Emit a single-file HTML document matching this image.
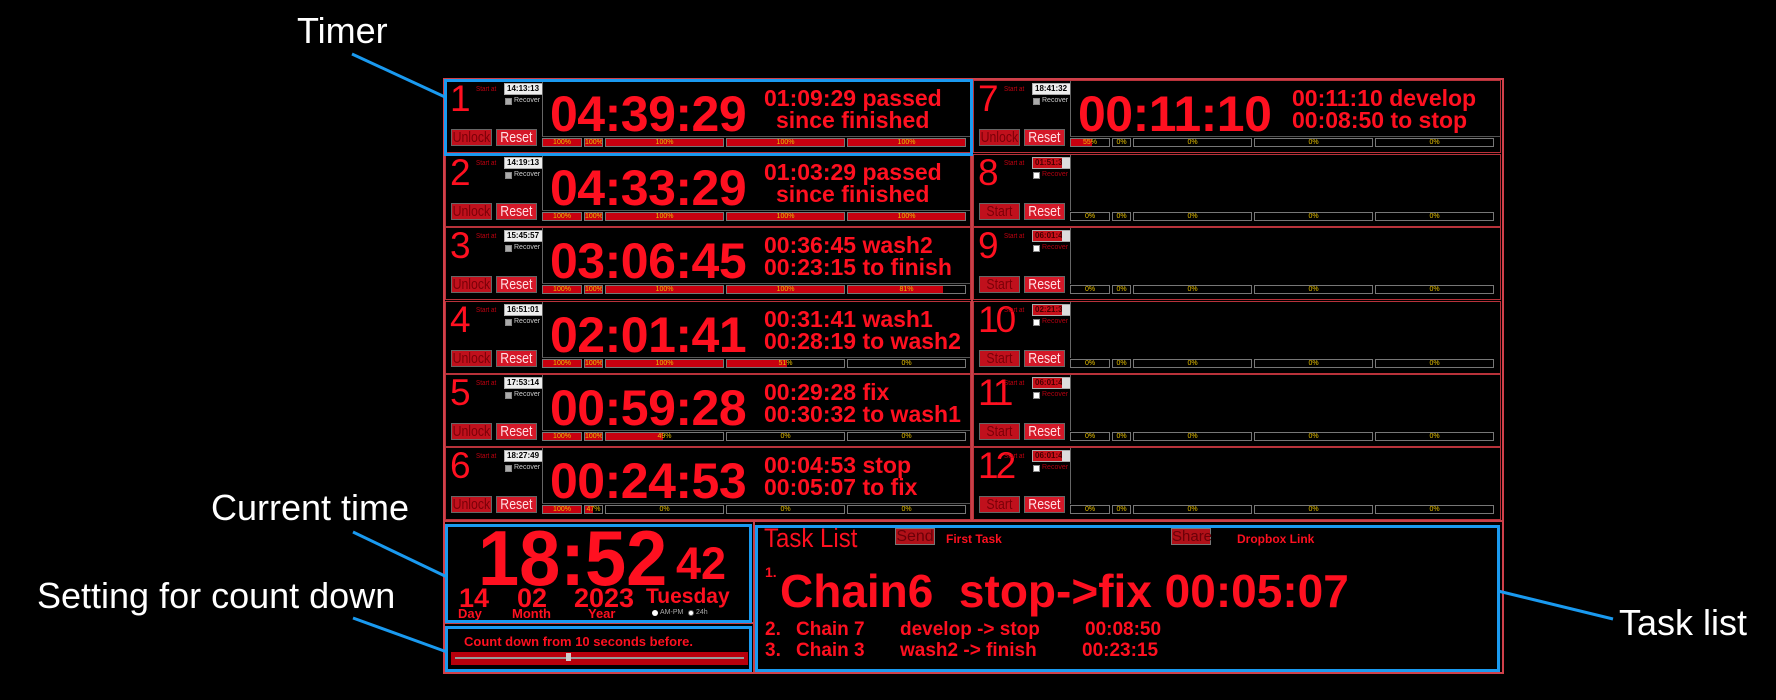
<!DOCTYPE html>
<html><head><meta charset="utf-8">
<style>
*{margin:0;padding:0;box-sizing:border-box}
body{width:1776px;height:700px;background:#000;position:relative;overflow:hidden;font-family:"Liberation Sans",sans-serif;color:#ff1020}
.a{position:absolute}
.cell{position:absolute;height:73px;border:1px solid #b8323a;overflow:hidden;background:#000}
.n{position:absolute;left:4px;top:-2px;font-size:37px;line-height:40px;color:#ff1020}
.sa{position:absolute;left:30px;top:5px;font-size:7px;color:#c00010;transform:scaleX(0.9);transform-origin:left}
.ti{position:absolute;left:58px;top:2px;width:39px;height:12px;background:#eee;border:1px solid #aaa;font-size:8px;font-weight:bold;color:#000;line-height:10px;padding-left:2px}
.ti.d{background:#c8101a;color:#400}
.ti.d::after{content:"";position:absolute;right:0;top:0;width:8px;height:10px;background:#ddd}
.cb{position:absolute;left:59px;top:17px;width:7px;height:7px;background:#aaa;border:1px solid #888}
.cb.w{background:#fff}
.rc{position:absolute;left:68px;top:16px;font-size:7px;color:#ccc}
.rc.r{color:#b00010}
.b1,.b2{position:absolute;top:48px;height:17px;width:41px;border:1px solid #666;overflow:hidden}
.b1 span,.b2 span{display:block;width:125%;margin-left:-12.5%;text-align:center;font-size:15px;line-height:15px;transform:scaleX(0.82)}
.b1{left:5px;background:#c0101c;color:#7a0008}
.b2{left:50px;background:#d41828;color:#ffe0e4}
.dv{position:absolute;left:96px;top:0;width:1px;height:56px;background:#666}
.hl{position:absolute;left:96px;top:55px;right:0;height:1px;background:#555}
.bt{position:absolute;left:104px;top:5px;font-size:50px;font-weight:bold;line-height:56px;letter-spacing:-0.5px}
.r1,.r2{position:absolute;font-size:23px;font-weight:bold;line-height:24px;white-space:nowrap}
.r1{left:318px;top:5px}.r2{left:318px;top:27px}
.bar{position:absolute;top:57px;height:9px;border:1px solid #777;background:#000;font-size:7px;line-height:7px;color:#e8c000;text-align:center;overflow:hidden}
.bar i{position:absolute;left:0;top:0;bottom:0;background:#c8000f}
.bar span{position:relative}
.lbl{position:absolute;color:#fff;font-size:36px;white-space:nowrap}
.blue{position:absolute;border:3px solid #1a9af0}
</style></head><body>

<div class="a" style="left:443px;top:78px;width:1061px;height:596px;border:2px solid #d0404a"></div>
<div class="a" style="left:971px;top:79px;width:2px;height:442px;background:#c84048"></div>

<div class="cell" style="left:445px;top:80px;width:526px">
<div class="n">1</div><div class="sa">Start at</div><div class="ti">14:13:13</div><div class="cb"></div><div class="rc">Recover</div>
<div class="b1"><span>Unlock</span></div><div class="b2"><span>Reset</span></div><div class="dv"></div><div class="hl"></div>
<div class="bt">04:39:29</div><div class="r1">01:09:29 passed</div><div class="r2" style="left:330px">since finished</div>
<div class="bar" style="left:96px;width:40px"><i style="width:100%"></i><span>100%</span></div>
<div class="bar" style="left:138px;width:19px"><i style="width:100%"></i><span>100%</span></div>
<div class="bar" style="left:159px;width:119px"><i style="width:100%"></i><span>100%</span></div>
<div class="bar" style="left:280px;width:119px"><i style="width:100%"></i><span>100%</span></div>
<div class="bar" style="left:401px;width:119px"><i style="width:100%"></i><span>100%</span></div>
</div>

<div class="cell" style="left:445px;top:154px;width:526px">
<div class="n">2</div><div class="sa">Start at</div><div class="ti">14:19:13</div><div class="cb"></div><div class="rc">Recover</div>
<div class="b1"><span>Unlock</span></div><div class="b2"><span>Reset</span></div><div class="dv"></div><div class="hl"></div>
<div class="bt">04:33:29</div><div class="r1">01:03:29 passed</div><div class="r2" style="left:330px">since finished</div>
<div class="bar" style="left:96px;width:40px"><i style="width:100%"></i><span>100%</span></div>
<div class="bar" style="left:138px;width:19px"><i style="width:100%"></i><span>100%</span></div>
<div class="bar" style="left:159px;width:119px"><i style="width:100%"></i><span>100%</span></div>
<div class="bar" style="left:280px;width:119px"><i style="width:100%"></i><span>100%</span></div>
<div class="bar" style="left:401px;width:119px"><i style="width:100%"></i><span>100%</span></div>
</div>

<div class="cell" style="left:445px;top:227px;width:526px">
<div class="n">3</div><div class="sa">Start at</div><div class="ti">15:45:57</div><div class="cb"></div><div class="rc">Recover</div>
<div class="b1"><span>Unlock</span></div><div class="b2"><span>Reset</span></div><div class="dv"></div><div class="hl"></div>
<div class="bt">03:06:45</div><div class="r1">00:36:45 wash2</div><div class="r2">00:23:15 to finish</div>
<div class="bar" style="left:96px;width:40px"><i style="width:100%"></i><span>100%</span></div>
<div class="bar" style="left:138px;width:19px"><i style="width:100%"></i><span>100%</span></div>
<div class="bar" style="left:159px;width:119px"><i style="width:100%"></i><span>100%</span></div>
<div class="bar" style="left:280px;width:119px"><i style="width:100%"></i><span>100%</span></div>
<div class="bar" style="left:401px;width:119px"><i style="width:81%"></i><span>81%</span></div>
</div>

<div class="cell" style="left:445px;top:301px;width:526px">
<div class="n">4</div><div class="sa">Start at</div><div class="ti">16:51:01</div><div class="cb"></div><div class="rc">Recover</div>
<div class="b1"><span>Unlock</span></div><div class="b2"><span>Reset</span></div><div class="dv"></div><div class="hl"></div>
<div class="bt">02:01:41</div><div class="r1">00:31:41 wash1</div><div class="r2">00:28:19 to wash2</div>
<div class="bar" style="left:96px;width:40px"><i style="width:100%"></i><span>100%</span></div>
<div class="bar" style="left:138px;width:19px"><i style="width:100%"></i><span>100%</span></div>
<div class="bar" style="left:159px;width:119px"><i style="width:100%"></i><span>100%</span></div>
<div class="bar" style="left:280px;width:119px"><i style="width:51%"></i><span>51%</span></div>
<div class="bar" style="left:401px;width:119px"><span>0%</span></div>
</div>

<div class="cell" style="left:445px;top:374px;width:526px">
<div class="n">5</div><div class="sa">Start at</div><div class="ti">17:53:14</div><div class="cb"></div><div class="rc">Recover</div>
<div class="b1"><span>Unlock</span></div><div class="b2"><span>Reset</span></div><div class="dv"></div><div class="hl"></div>
<div class="bt">00:59:28</div><div class="r1">00:29:28 fix</div><div class="r2">00:30:32 to wash1</div>
<div class="bar" style="left:96px;width:40px"><i style="width:100%"></i><span>100%</span></div>
<div class="bar" style="left:138px;width:19px"><i style="width:100%"></i><span>100%</span></div>
<div class="bar" style="left:159px;width:119px"><i style="width:49%"></i><span>49%</span></div>
<div class="bar" style="left:280px;width:119px"><span>0%</span></div>
<div class="bar" style="left:401px;width:119px"><span>0%</span></div>
</div>

<div class="cell" style="left:445px;top:447px;width:526px">
<div class="n">6</div><div class="sa">Start at</div><div class="ti">18:27:49</div><div class="cb"></div><div class="rc">Recover</div>
<div class="b1"><span>Unlock</span></div><div class="b2"><span>Reset</span></div><div class="dv"></div><div class="hl"></div>
<div class="bt">00:24:53</div><div class="r1">00:04:53 stop</div><div class="r2">00:05:07 to fix</div>
<div class="bar" style="left:96px;width:40px"><i style="width:100%"></i><span>100%</span></div>
<div class="bar" style="left:138px;width:19px"><i style="width:47%"></i><span>47%</span></div>
<div class="bar" style="left:159px;width:119px"><span>0%</span></div>
<div class="bar" style="left:280px;width:119px"><span>0%</span></div>
<div class="bar" style="left:401px;width:119px"><span>0%</span></div>
</div>

<div class="cell" style="left:973px;top:80px;width:528px">
<div class="n">7</div><div class="sa">Start at</div><div class="ti">18:41:32</div><div class="cb"></div><div class="rc">Recover</div>
<div class="b1"><span>Unlock</span></div><div class="b2"><span>Reset</span></div><div class="dv"></div><div class="hl"></div>
<div class="bt">00:11:10</div><div class="r1">00:11:10 develop</div><div class="r2">00:08:50 to stop</div>
<div class="bar" style="left:96px;width:40px"><i style="width:55%"></i><span>55%</span></div>
<div class="bar" style="left:138px;width:19px"><span>0%</span></div>
<div class="bar" style="left:159px;width:119px"><span>0%</span></div>
<div class="bar" style="left:280px;width:119px"><span>0%</span></div>
<div class="bar" style="left:401px;width:119px"><span>0%</span></div>
</div>

<div class="cell" style="left:973px;top:154px;width:528px">
<div class="n">8</div><div class="sa">Start at</div><div class="ti d">01:51:30</div><div class="cb w"></div><div class="rc r">Recover</div>
<div class="b1"><span>Start</span></div><div class="b2"><span>Reset</span></div><div class="dv"></div>
<div class="bar" style="left:96px;width:40px"><span>0%</span></div>
<div class="bar" style="left:138px;width:19px"><span>0%</span></div>
<div class="bar" style="left:159px;width:119px"><span>0%</span></div>
<div class="bar" style="left:280px;width:119px"><span>0%</span></div>
<div class="bar" style="left:401px;width:119px"><span>0%</span></div>
</div>

<div class="cell" style="left:973px;top:227px;width:528px">
<div class="n">9</div><div class="sa">Start at</div><div class="ti d">06:01:43</div><div class="cb w"></div><div class="rc r">Recover</div>
<div class="b1"><span>Start</span></div><div class="b2"><span>Reset</span></div><div class="dv"></div>
<div class="bar" style="left:96px;width:40px"><span>0%</span></div>
<div class="bar" style="left:138px;width:19px"><span>0%</span></div>
<div class="bar" style="left:159px;width:119px"><span>0%</span></div>
<div class="bar" style="left:280px;width:119px"><span>0%</span></div>
<div class="bar" style="left:401px;width:119px"><span>0%</span></div>
</div>

<div class="cell" style="left:973px;top:301px;width:528px">
<div class="n" style="letter-spacing:-3px">10</div><div class="sa">Start at</div><div class="ti d">02:21:30</div><div class="cb w"></div><div class="rc r">Recover</div>
<div class="b1"><span>Start</span></div><div class="b2"><span>Reset</span></div><div class="dv"></div>
<div class="bar" style="left:96px;width:40px"><span>0%</span></div>
<div class="bar" style="left:138px;width:19px"><span>0%</span></div>
<div class="bar" style="left:159px;width:119px"><span>0%</span></div>
<div class="bar" style="left:280px;width:119px"><span>0%</span></div>
<div class="bar" style="left:401px;width:119px"><span>0%</span></div>
</div>

<div class="cell" style="left:973px;top:374px;width:528px">
<div class="n" style="letter-spacing:-3px">11</div><div class="sa">Start at</div><div class="ti d">06:01:43</div><div class="cb w"></div><div class="rc r">Recover</div>
<div class="b1"><span>Start</span></div><div class="b2"><span>Reset</span></div><div class="dv"></div>
<div class="bar" style="left:96px;width:40px"><span>0%</span></div>
<div class="bar" style="left:138px;width:19px"><span>0%</span></div>
<div class="bar" style="left:159px;width:119px"><span>0%</span></div>
<div class="bar" style="left:280px;width:119px"><span>0%</span></div>
<div class="bar" style="left:401px;width:119px"><span>0%</span></div>
</div>

<div class="cell" style="left:973px;top:447px;width:528px">
<div class="n" style="letter-spacing:-3px">12</div><div class="sa">Start at</div><div class="ti d">06:01:43</div><div class="cb w"></div><div class="rc r">Recover</div>
<div class="b1"><span>Start</span></div><div class="b2"><span>Reset</span></div><div class="dv"></div>
<div class="bar" style="left:96px;width:40px"><span>0%</span></div>
<div class="bar" style="left:138px;width:19px"><span>0%</span></div>
<div class="bar" style="left:159px;width:119px"><span>0%</span></div>
<div class="bar" style="left:280px;width:119px"><span>0%</span></div>
<div class="bar" style="left:401px;width:119px"><span>0%</span></div>
</div>

<div class="a" style="left:444px;top:520px;width:1059px;height:2px;background:#c84048"></div>
<div class="a" style="left:753px;top:521px;width:2px;height:152px;background:#c84048"></div>
<div class="a" style="left:444px;top:622px;width:310px;height:2px;background:#c84048"></div>

<div class="a" style="left:478px;top:520px;font-size:74px;font-weight:bold;line-height:74px;transform:scaleY(1.05);transform-origin:top">18:52</div>
<div class="a" style="left:676px;top:541px;font-size:45px;font-weight:bold;line-height:45px">42</div>
<div class="a" style="left:459px;top:585px;font-size:27px;font-weight:bold;line-height:27px">14</div>
<div class="a" style="left:517px;top:585px;font-size:27px;font-weight:bold;line-height:27px">02</div>
<div class="a" style="left:574px;top:585px;font-size:27px;font-weight:bold;line-height:27px">2023</div>
<div class="a" style="left:646px;top:586px;font-size:21px;font-weight:bold;line-height:22px">Tuesday</div>
<div class="a" style="left:458px;top:607px;font-size:13px;font-weight:bold;line-height:13px">Day</div>
<div class="a" style="left:512px;top:607px;font-size:13px;font-weight:bold;line-height:13px">Month</div>
<div class="a" style="left:588px;top:607px;font-size:13px;font-weight:bold;line-height:13px">Year</div>
<div class="a" style="left:652px;top:610px;width:6px;height:6px;border-radius:50%;background:#fff"></div>
<div class="a" style="left:660px;top:609px;font-size:7px;color:#aaa">AM-PM</div>
<div class="a" style="left:688px;top:610px;width:6px;height:6px;border-radius:50%;background:#fff;border:1px solid #666"></div>
<div class="a" style="left:696px;top:609px;font-size:7px;color:#aaa">24h</div>

<div class="a" style="left:464px;top:634px;font-size:13px;font-weight:bold">Count down from 10 seconds before.</div>
<div class="a" style="left:451px;top:652px;width:297px;height:13px;background:#b8000c"></div>
<div class="a" style="left:455px;top:657px;width:289px;height:2px;background:#999"></div>
<div class="a" style="left:566px;top:653px;width:5px;height:8px;background:#ccc"></div>

<div class="a" style="left:764px;top:525px;font-size:24px;line-height:26px;transform:scaleY(1.1);transform-origin:top">Task List</div>
<div class="a" style="left:895px;top:528px;width:40px;height:17px;background:#b01018;border:1px solid #777;color:#6a0008;font-size:16px;line-height:15px;text-align:center">Send</div>
<div class="a" style="left:946px;top:532px;font-size:12px;font-weight:bold">First Task</div>
<div class="a" style="left:1171px;top:528px;width:40px;height:17px;background:#b01018;border:1px solid #777;color:#6a0008;font-size:15px;line-height:15px;text-align:center">Share</div>
<div class="a" style="left:1237px;top:532px;font-size:12px;font-weight:bold">Dropbox Link</div>
<div class="a" style="left:765px;top:564px;font-size:14px;font-weight:bold">1.</div>
<div class="a" style="left:780px;top:566px;font-size:46px;font-weight:bold;line-height:50px;white-space:pre">Chain6  stop-&gt;fix 00:05:07</div>
<div class="a" style="left:765px;top:620px;font-size:19px;font-weight:bold;line-height:20px">2.</div>
<div class="a" style="left:796px;top:620px;font-size:19px;font-weight:bold;line-height:20px">Chain 7</div>
<div class="a" style="left:900px;top:620px;font-size:19px;font-weight:bold;line-height:20px">develop -&gt; stop</div>
<div class="a" style="left:1085px;top:620px;font-size:19px;font-weight:bold;line-height:20px">00:08:50</div>
<div class="a" style="left:765px;top:641px;font-size:19px;font-weight:bold;line-height:20px">3.</div>
<div class="a" style="left:796px;top:641px;font-size:19px;font-weight:bold;line-height:20px">Chain 3</div>
<div class="a" style="left:900px;top:641px;font-size:19px;font-weight:bold;line-height:20px">wash2 -&gt; finish</div>
<div class="a" style="left:1082px;top:641px;font-size:19px;font-weight:bold;line-height:20px">00:23:15</div>

<div class="blue" style="left:444px;top:79px;width:529px;height:77px"></div>
<div class="blue" style="left:445px;top:524px;width:307px;height:99px"></div>
<div class="blue" style="left:445px;top:626px;width:307px;height:46px"></div>
<div class="blue" style="left:755px;top:525px;width:745px;height:147px"></div>
<svg class="a" style="left:0;top:0" width="1776" height="700">
<g stroke="#1a9af0" stroke-width="3" fill="none">
<line x1="352" y1="54" x2="445" y2="97"/>
<line x1="353" y1="532" x2="447" y2="577"/>
<line x1="353" y1="618" x2="447" y2="652"/>
<line x1="1498" y1="591" x2="1613" y2="619"/>
</g></svg>
<div class="lbl" style="left:297px;top:10px">Timer</div>
<div class="lbl" style="left:211px;top:487px">Current time</div>
<div class="lbl" style="left:37px;top:575px">Setting for count down</div>
<div class="lbl" style="left:1619px;top:602px">Task list</div>
</body></html>
